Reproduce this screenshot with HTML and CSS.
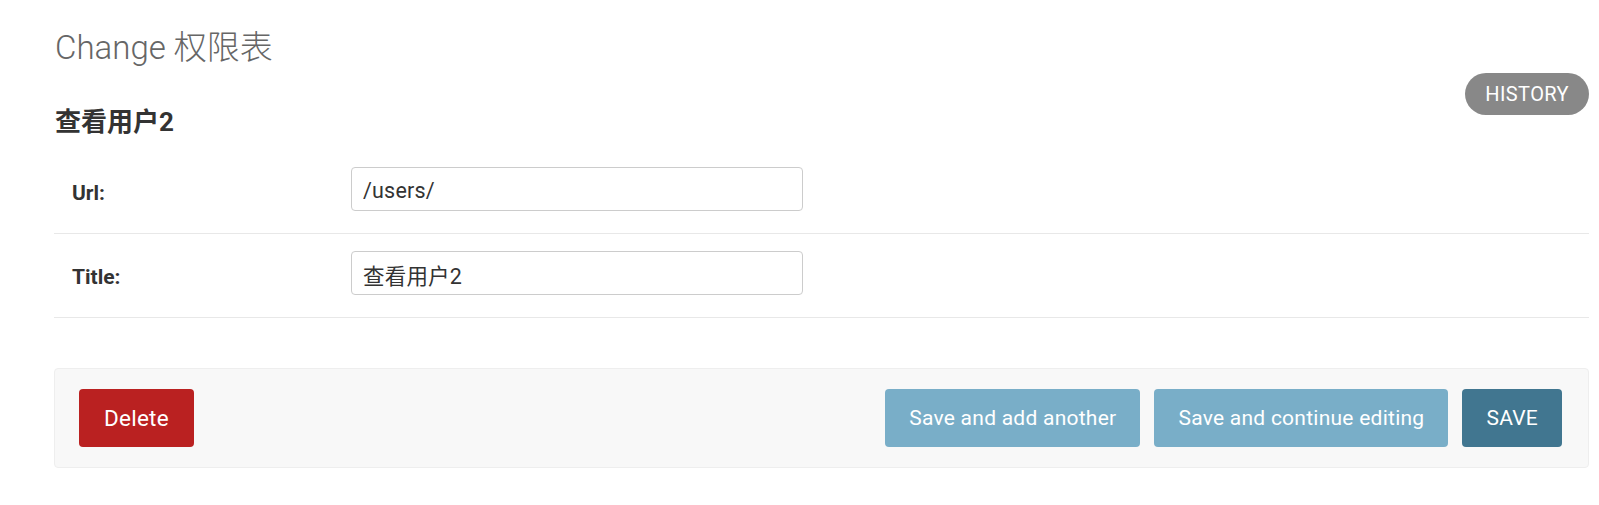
FILE: index.html
```html
<!DOCTYPE html>
<html lang="zh">
<head>
<meta charset="utf-8">
<title>Change 权限表</title>
<link rel="stylesheet" href="styles.css">
</head>
<body>
<div class="content">
  <h1 class="page-title">Change 权限表</h1>
  <div class="head-row">
    <h2 class="object-name">查看用户2</h2>
    <a class="history-link" href="#">History</a>
  </div>
  <form class="change-form">
    <fieldset class="module">
      <div class="form-row">
        <label class="field-label" for="id_url">Url:</label>
        <input class="field-input" id="id_url" type="text" value="/users/">
      </div>
      <div class="form-row">
        <label class="field-label" for="id_title">Title:</label>
        <input class="field-input" id="id_title" type="text" value="查看用户2">
      </div>
    </fieldset>
    <div class="submit-row">
      <a class="btn btn-delete" href="#">Delete</a>
      <div class="submit-actions">
        <button type="button" class="btn btn-light">Save and add another</button>
        <button type="button" class="btn btn-light">Save and continue editing</button>
        <button type="button" class="btn btn-default">SAVE</button>
      </div>
    </div>
  </form>
</div>
</body>
</html>
```

FILE: styles.css
```css
html, body {
  margin: 0;
  padding: 0;
  background: #fff;
}

body {
  font-family: Roboto, "Noto Sans CJK SC", sans-serif;
  color: #333;
}

.content {
  padding: 29px 10px 0 54px;
}

.page-title {
  margin: 0 0 0 1px;
  font-size: 33px;
  line-height: 38px;
  font-weight: 300;
  color: #666;
}

.head-row {
  display: flex;
  justify-content: space-between;
  align-items: flex-end;
  margin-top: 6px;
  margin-bottom: 12px;
}

.object-name {
  margin: 0 0 0 1px;
  padding-top: 33px;
  font-size: 26px;
  line-height: 32px;
  font-weight: 700;
  color: #333;
}

.history-link {
  align-self: flex-start;
  display: block;
  padding: 10px 20px;
  border-radius: 21px;
  background: #888;
  color: #fff;
  text-decoration: none;
  text-transform: uppercase;
  font-size: 20px;
  line-height: 22px;
  letter-spacing: 0.4px;
}

.change-form {
  margin: 0;
}

.module {
  margin: 0;
  padding: 0;
  border: 0;
}

.form-row {
  display: flex;
  align-items: flex-start;
  padding: 17px 18px 22px;
  border-bottom: 1px solid #e8e8e8;
}

.field-label {
  width: 279px;
  flex: none;
  padding-top: 14px;
  font-size: 21px;
  line-height: 24px;
  font-weight: 700;
  color: #333;
}

.field-input {
  box-sizing: border-box;
  width: 452px;
  height: 44px;
  margin: 0;
  padding: 3px 11px 0;
  border: 1px solid #ccc;
  border-radius: 4px;
  font-family: Roboto, "Noto Sans CJK SC", sans-serif;
  font-size: 21.5px;
  letter-spacing: 0.2px;
  color: #333;
  background: #fff;
}

.submit-row {
  display: flex;
  justify-content: space-between;
  align-items: center;
  margin-top: 50px;
  padding: 20px 26px 20px 24px;
  background: #f8f8f8;
  border: 1px solid #eee;
  border-radius: 4px;
}

.submit-actions {
  display: flex;
  gap: 14px;
}

.btn {
  box-sizing: border-box;
  display: inline-flex;
  align-items: center;
  justify-content: center;
  height: 58px;
  padding: 0 24px;
  border: 0;
  border-radius: 4px;
  font-family: Roboto, sans-serif;
  font-size: 21px;
  letter-spacing: 0.25px;
  color: #fff;
  text-decoration: none;
  cursor: pointer;
}

.btn-delete {
  padding: 0 25px;
  font-size: 22.5px;
  background: #ba2121;
}

.btn-light {
  background: #79aec8;
}

.btn-default {
  background: #417690;
}
```
